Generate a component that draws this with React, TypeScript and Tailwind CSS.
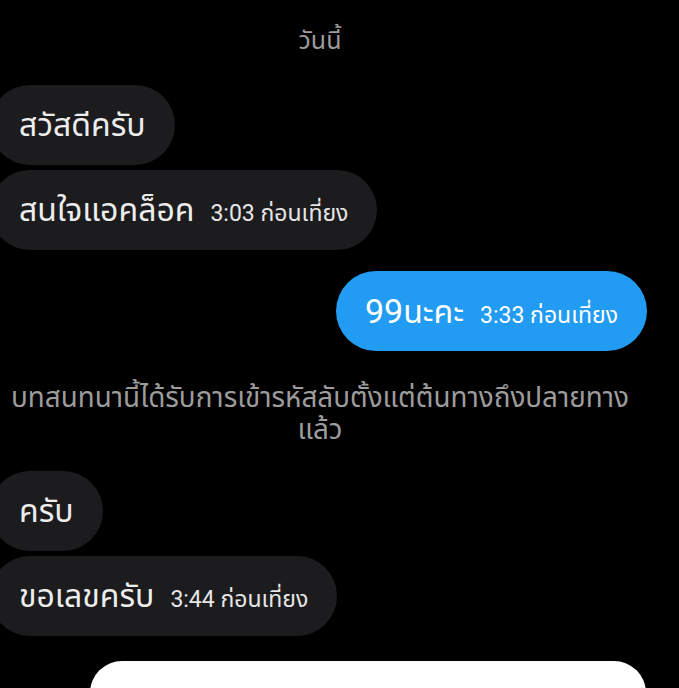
import React from "react";

const font = { fontFamily: "Roboto, 'Noto Sans', 'Noto Sans Thai', sans-serif" };

function In({ text, time }: { text: string; time?: string }) {
  return (
    <div className="flex">
      <div className="ml-[-10px] h-[80px] rounded-full bg-[#1c1c1e] pl-[29px] pr-[29px] flex items-center">
        <div className="flex items-baseline gap-[16px]">
          <span className="text-[32px] text-[#ededed] leading-none">{text}</span>
          {time && <span className="text-[23px] text-[#e6e6e6] leading-none">{time}</span>}
        </div>
      </div>
    </div>
  );
}

export default function App() {
  return (
    <div className="w-[679px] h-[688px] bg-black overflow-hidden relative" style={font}>
      <div className="flex flex-col">
        <div className="w-[640px] text-center text-[25px] text-[#9c9c9c] mt-[26px] leading-[30px]">วันนี้</div>
        <div className="mt-[29px] flex flex-col gap-[5px]">
          <In text="สวัสดีครับ" />
          <In text="สนใจแอคล็อค" time="3:03 ก่อนเที่ยง" />
        </div>
        <div className="mt-[21px] flex justify-end pr-[32px]">
          <div className="h-[80px] rounded-full bg-[#229bf2] px-[29px] flex items-center">
            <div className="flex items-baseline gap-[16px]">
              <span className="text-[32px] text-white leading-none"><span className="text-[34px]">99</span>นะคะ</span>
              <span className="text-[23px] text-white leading-none">3:33 ก่อนเที่ยง</span>
            </div>
          </div>
        </div>
        <div className="mt-[31px] w-[640px] text-center text-[27.8px] leading-[32px] text-[#9c9c9c] whitespace-nowrap">
          บทสนทนานี้ได้รับการเข้ารหัสลับตั้งแต่ต้นทางถึงปลายทาง<br />แล้ว
        </div>
        <div className="mt-[25px] flex flex-col gap-[5px]">
          <In text="ครับ" />
          <In text="ขอเลขครับ" time="3:44 ก่อนเที่ยง" />
        </div>
        <div className="mt-[25px] ml-[90px] w-[556px] h-[80px] bg-white rounded-t-[32px]" />
      </div>
    </div>
  );
}
